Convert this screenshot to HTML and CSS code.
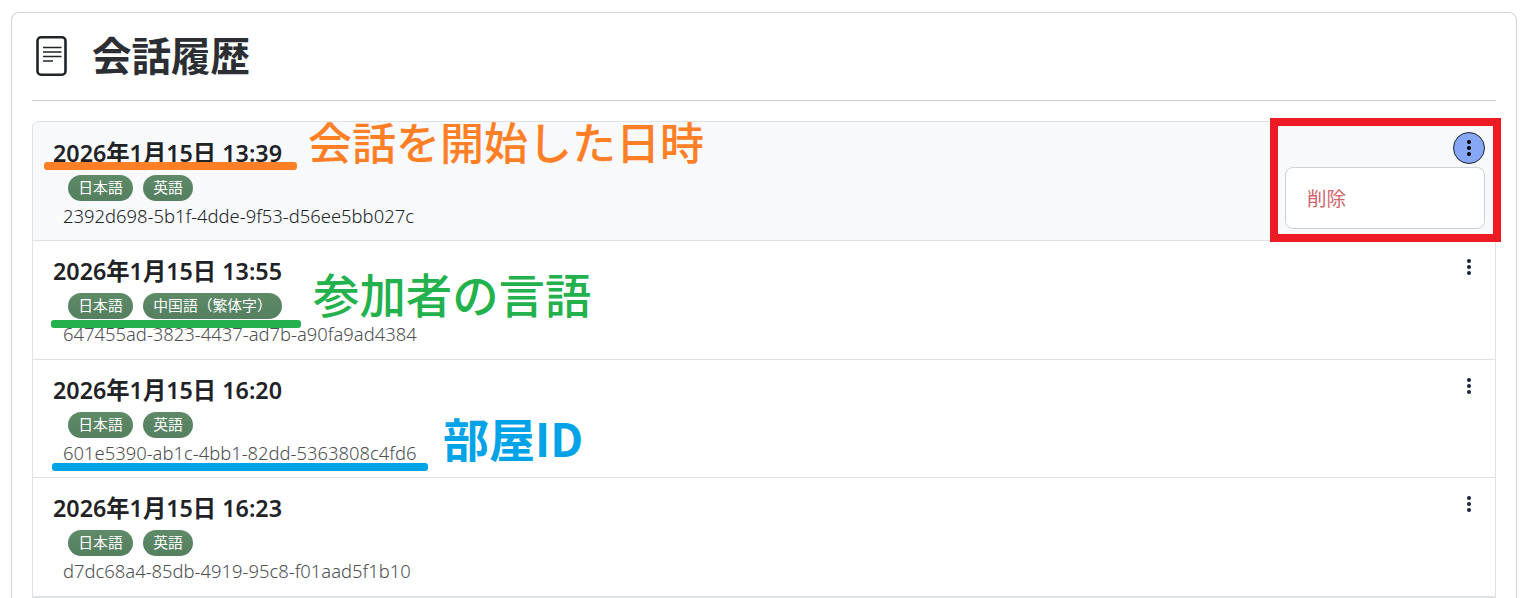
FILE: index.html
```html
<!DOCTYPE html>
<html lang="ja">
<head>
<meta charset="UTF-8">
<meta name="viewport" content="width=device-width, initial-scale=1.0">
<title>会話履歴</title>
<link rel="stylesheet" href="styles.css">
</head>
<body>
  <div class="card">
    <div class="card-head">
      <svg class="head-icon" width="32" height="40" viewBox="0 0 32 40" fill="none" stroke="#212529">
        <rect x="1.5" y="1.3" width="28" height="37.4" rx="3.5" stroke-width="2.6"/>
        <path d="M7 11.5H25.5M7 16H25.5M7 20.5H25.5M7 25H17" stroke-width="1.6"/>
      </svg>
      <h1>会話履歴</h1>
    </div>
    <div class="history">
      <div class="row first">
        <div class="row-main">
          <div class="date">2026年1月15日 13:39</div>
          <div class="langs"><span class="lang">日本語</span><span class="lang">英語</span></div>
          <div class="room">2392d698-5b1f-4dde-9f53-d56ee5bb027c</div>
        </div>
        <div class="row-side">
          <button class="more open"><i></i><i></i><i></i></button>
          <div class="menu">削除</div>
        </div>
      </div>
      <div class="row">
        <div class="row-main">
          <div class="date">2026年1月15日 13:55</div>
          <div class="langs"><span class="lang">日本語</span><span class="lang">中国語（繁体字）</span></div>
          <div class="room muted">647455ad-3823-4437-ad7b-a90fa9ad4384</div>
        </div>
        <div class="row-side"><button class="more"><i></i><i></i><i></i></button></div>
      </div>
      <div class="row short">
        <div class="row-main">
          <div class="date">2026年1月15日 16:20</div>
          <div class="langs"><span class="lang">日本語</span><span class="lang">英語</span></div>
          <div class="room muted">601e5390-ab1c-4bb1-82dd-5363808c4fd6</div>
        </div>
        <div class="row-side"><button class="more"><i></i><i></i><i></i></button></div>
      </div>
      <div class="row">
        <div class="row-main">
          <div class="date">2026年1月15日 16:23</div>
          <div class="langs"><span class="lang">日本語</span><span class="lang">英語</span></div>
          <div class="room muted">d7dc68a4-85db-4919-95c8-f01aad5f1b10</div>
        </div>
        <div class="row-side"><button class="more"><i></i><i></i><i></i></button></div>
      </div>
    </div>
  </div>

  <!-- annotations drawn over the screenshot -->
  <div class="note note-orange">会話を開始した日時</div>
  <div class="note note-green">参加者の言語</div>
  <div class="note note-blue">部屋ID</div>
  <div class="line line-orange"></div>
  <div class="line line-green"></div>
  <div class="line line-blue"></div>
  <div class="red-box"></div>
</body>
</html>
```

FILE: styles.css
```css
* { box-sizing: border-box; }
html, body { height: 598px; overflow: hidden; }
body { margin: 0; background-color: #fff; color: #212529; font-family: "Noto Sans", "Noto Sans CJK JP", sans-serif; position: relative; }
.card { margin: 12px 14px 0 11px; padding: 0 20px; border: 1px solid #d3d4d6; border-bottom: 0; border-radius: 8px 8px 0 0; }
.card-head { display: flex; align-items: center; gap: 24px; height: 88px; padding: 0 0 2px 4px; border-bottom: 1px solid #cfd0d2; }
.card-head h1 { margin: 0; padding-bottom: 3px; font-size: 39.5px; font-weight: 700; line-height: 1; color: #2b2e33; font-family: "Noto Sans CJK JP", sans-serif; }
.history { margin-top: 20px; border: 1px solid #dee2e6; border-radius: 6px 6px 0 0; }
.row { display: flex; justify-content: space-between; height: 119px; padding: 13px 10px 0 20px; border-bottom: 1px solid #dee2e6; }
.row.first { padding-top: 14px; background-color: #f8f9fa; border-radius: 6px 6px 0 0; }
.row.short { height: 118px; }
.date { font-size: 23.3px; font-weight: 600; line-height: 34px; color: #1f2226; }
.langs { display: flex; gap: 10px; margin: 5px 0 0 15px; }
.lang { height: 26px; padding: 0 10.3px; border-radius: 13px; font-size: 14.8px; line-height: 25px; color: #fff; background: linear-gradient(#5e8a68, #558060); }
.room { margin: 2px 0 0 10px; font-size: 18.4px; font-weight: 300; line-height: 26px; color: #212529; }
.room.muted { color: #4d4f52; }
.row-side { display: flex; flex-direction: column; align-items: flex-end; }
.more { display: flex; flex-direction: column; align-items: center; justify-content: center; gap: 2px; width: 32px; height: 32px; margin-top: -3px; padding: 0; border: 0; border-radius: 50%; background: none; }
.more i { width: 4px; height: 4px; border-radius: 50%; background-color: #14233a; }
.more.open { margin-top: -4px; border: 1px solid #212529; background-color: #86a7f5; }
.more.open i { background-color: #000; }
.menu { width: 200px; height: 62px; margin-top: 3px; padding-left: 21px; border: 1px solid #ced1d5; border-radius: 8px; background-color: #fff; color: #cf646d; font-size: 19.5px; font-weight: 400; line-height: 60px; font-family: "Noto Sans CJK JP", sans-serif; }

/* annotations */
.note { position: absolute; font-family: "Noto Sans CJK JP", sans-serif; font-weight: 500; font-size: 44px; line-height: 1; white-space: nowrap; }
.note-orange { left: 308px; top: 119px; color: #ff7f27; }
.note-green { left: 313px; top: 270px; font-size: 46.4px; color: #22b14c; }
.note-blue { left: 443px; top: 414px; font-size: 46px; color: #00a2e8; font-weight: 700; }
.line { position: absolute; height: 8px; border-radius: 3px; }
.line-orange { left: 44px; top: 162px; width: 253px; background-color: #ff7f27; }
.line-green { left: 51px; top: 320px; width: 250px; background-color: #22b14c; }
.line-blue { left: 52px; top: 463px; width: 376px; background-color: #00a2e8; }
.red-box { position: absolute; left: 1270px; top: 118px; width: 231px; height: 124px; border: 8px solid #ed1c24; }
```
